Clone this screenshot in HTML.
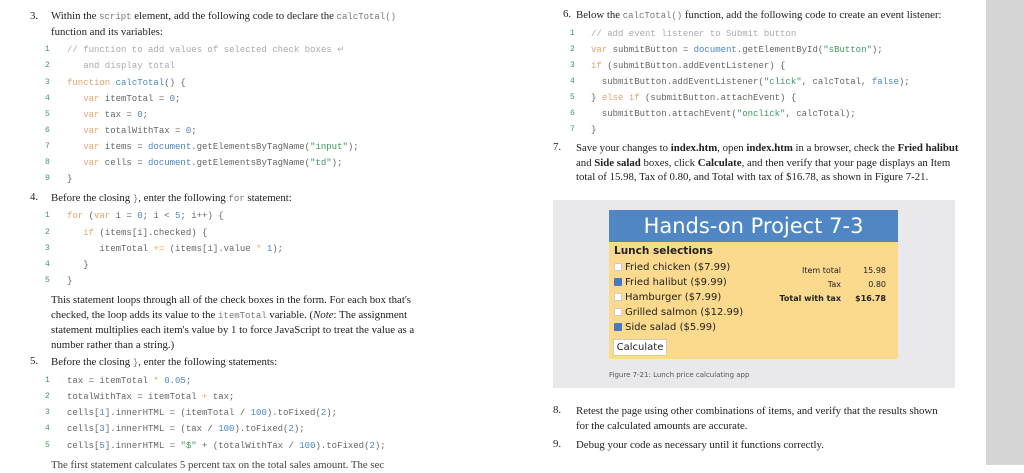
<!DOCTYPE html>
<html><head><meta charset="utf-8"><style>
body{margin:0;width:1024px;height:465px;position:relative;overflow:hidden;background:#fff;font-family:"Liberation Serif",serif;color:#222}
.t{position:absolute;font-size:10.8px;line-height:14.5px;white-space:nowrap}
.n{position:absolute;font-size:10.8px}
.c{position:absolute;font-family:"Liberation Mono",monospace;font-size:9px;color:#666;white-space:pre;line-height:10px}
.ln{position:absolute;font-family:"Liberation Mono",monospace;font-size:8px;color:#3a9a5a;line-height:10px}
.k{color:#e2a36a}.b{color:#4a86c0}.s{color:#3a9a5a}.g{color:#aaa}
code{font-family:"Liberation Mono",monospace;font-size:9px;color:#777}
.cb{display:inline-block;width:6px;height:6px;border:1px solid #ccc;background:#fff;border-radius:1px;margin-right:3px;vertical-align:-1px}
.cb.on{background:#4a78c0;border-color:#4a78c0}
</style></head><body>
<div style="position:absolute;left:986px;top:0;width:38px;height:465px;background:#d6d6d6"></div>

<div class="n" style="left:30px;top:10px">3.</div>
<div class="t" style="left:51px;top:9px;line-height:15px">Within the <code>script</code> element, add the following code to declare the <code>calcTotal()</code><br>function and its variables:</div>
<div class="ln" style="left:45px;top:45px">1</div><div class="c" style="left:67px;top:45px"><span class="g">// function to add values of selected check boxes ↵</span></div>
<div class="ln" style="left:45px;top:61px">2</div><div class="c" style="left:67px;top:61px"><span class="g">   and display total</span></div>
<div class="ln" style="left:45px;top:78px">3</div><div class="c" style="left:67px;top:78px"><span class="k">function</span> <span class="b">calcTotal</span>() {</div>
<div class="ln" style="left:45px;top:94px">4</div><div class="c" style="left:67px;top:94px">   <span class="k">var</span> itemTotal = <span class="b">0</span>;</div>
<div class="ln" style="left:45px;top:110px">5</div><div class="c" style="left:67px;top:110px">   <span class="k">var</span> tax = <span class="b">0</span>;</div>
<div class="ln" style="left:45px;top:126px">6</div><div class="c" style="left:67px;top:126px">   <span class="k">var</span> totalWithTax = <span class="b">0</span>;</div>
<div class="ln" style="left:45px;top:142px">7</div><div class="c" style="left:67px;top:142px">   <span class="k">var</span> items = <span class="b">document</span>.getElementsByTagName(<span class="s">"input"</span>);</div>
<div class="ln" style="left:45px;top:158px">8</div><div class="c" style="left:67px;top:158px">   <span class="k">var</span> cells = <span class="b">document</span>.getElementsByTagName(<span class="s">"td"</span>);</div>
<div class="ln" style="left:45px;top:174px">9</div><div class="c" style="left:67px;top:174px">}</div>

<div class="n" style="left:30px;top:191px">4.</div>
<div class="t" style="left:51px;top:191px">Before the closing <code>}</code>, enter the following <code>for</code> statement:</div>
<div class="ln" style="left:45px;top:211px">1</div><div class="c" style="left:67px;top:211px"><span class="k">for</span> (<span class="k">var</span> i = <span class="b">0</span>; i &lt; <span class="b">5</span>; i++) {</div>
<div class="ln" style="left:45px;top:228px">2</div><div class="c" style="left:67px;top:228px">   <span class="k">if</span> (items[i].checked) {</div>
<div class="ln" style="left:45px;top:244px">3</div><div class="c" style="left:67px;top:244px">      itemTotal <span class="k">+=</span> (items[i].value <span class="k">*</span> <span class="b">1</span>);</div>
<div class="ln" style="left:45px;top:260px">4</div><div class="c" style="left:67px;top:260px">   }</div>
<div class="ln" style="left:45px;top:276px">5</div><div class="c" style="left:67px;top:276px">}</div>
<div class="t" style="left:51px;top:293px">This statement loops through all of the check boxes in the form. For each box that's<br>checked, the loop adds its value to the <code>itemTotal</code> variable. (<i>Note</i>: The assignment<br>statement multiplies each item's value by 1 to force JavaScript to treat the value as a<br>number rather than a string.)</div>

<div class="n" style="left:30px;top:355px">5.</div>
<div class="t" style="left:51px;top:355px">Before the closing <code>}</code>, enter the following statements:</div>
<div class="ln" style="left:45px;top:376px">1</div><div class="c" style="left:67px;top:376px">tax = itemTotal <span class="k">*</span> <span class="b">0.05</span>;</div>
<div class="ln" style="left:45px;top:392px">2</div><div class="c" style="left:67px;top:392px">totalWithTax = itemTotal <span class="k">+</span> tax;</div>
<div class="ln" style="left:45px;top:408px">3</div><div class="c" style="left:67px;top:408px">cells[<span class="b">1</span>].innerHTML = (itemTotal / <span class="b">100</span>).toFixed(<span class="b">2</span>);</div>
<div class="ln" style="left:45px;top:424px">4</div><div class="c" style="left:67px;top:424px">cells[<span class="b">3</span>].innerHTML = (tax / <span class="b">100</span>).toFixed(<span class="b">2</span>);</div>
<div class="ln" style="left:45px;top:441px">5</div><div class="c" style="left:67px;top:441px">cells[<span class="b">5</span>].innerHTML = <span class="s">"$"</span> + (totalWithTax / <span class="b">100</span>).toFixed(<span class="b">2</span>);</div>
<div class="t" style="left:51px;top:458px;color:#444">The first statement calculates 5 percent tax on the total sales amount. The sec</div>

<div class="n" style="left:563px;top:8px">6.</div>
<div class="t" style="left:576px;top:8px">Below the <code>calcTotal()</code> function, add the following code to create an event listener:</div>
<div class="ln" style="left:570px;top:29px">1</div><div class="c" style="left:591px;top:29px"><span class="g">// add event listener to Submit button</span></div>
<div class="ln" style="left:570px;top:45px">2</div><div class="c" style="left:591px;top:45px"><span class="k">var</span> submitButton = <span class="b">document</span>.getElementById(<span class="s">"sButton"</span>);</div>
<div class="ln" style="left:570px;top:61px">3</div><div class="c" style="left:591px;top:61px"><span class="k">if</span> (submitButton.addEventListener) {</div>
<div class="ln" style="left:570px;top:77px">4</div><div class="c" style="left:591px;top:77px">  submitButton.addEventListener(<span class="s">"click"</span>, calcTotal, <span class="b">false</span>);</div>
<div class="ln" style="left:570px;top:93px">5</div><div class="c" style="left:591px;top:93px">} <span class="k">else if</span> (submitButton.attachEvent) {</div>
<div class="ln" style="left:570px;top:109px">6</div><div class="c" style="left:591px;top:109px">  submitButton.attachEvent(<span class="s">"onclick"</span>, calcTotal);</div>
<div class="ln" style="left:570px;top:125px">7</div><div class="c" style="left:591px;top:125px">}</div>
<div class="n" style="left:553px;top:141px">7.</div>
<div class="t" style="left:576px;top:141px">Save your changes to <b>index.htm</b>, open <b>index.htm</b> in a browser, check the <b>Fried halibut</b><br>and <b>Side salad</b> boxes, click <b>Calculate</b>, and then verify that your page displays an Item<br>total of 15.98, Tax of 0.80, and Total with tax of $16.78, as shown in Figure 7-21.</div>

<div style="position:absolute;left:553px;top:200px;width:402px;height:188px;background:#e9e9eb"></div>
<div style="position:absolute;left:609px;top:210px;width:289px;height:32px;background:#5086c4;color:#fff;font-family:'DejaVu Sans',sans-serif;font-size:21px;text-align:center;line-height:32px">Hands-on Project 7-3</div>
<div style="position:absolute;left:609px;top:242px;width:289px;height:117px;background:#fbd98d;font-family:'DejaVu Sans',sans-serif;color:#222">
 <div style="position:absolute;left:5px;top:3px;font-size:10.5px;font-weight:bold">Lunch selections</div>
 <div style="position:absolute;left:5px;top:18px;font-size:10px;line-height:15px;white-space:nowrap">
  <span class="cb"></span>Fried chicken ($7.99)<br>
  <span class="cb on"></span>Fried halibut ($9.99)<br>
  <span class="cb"></span>Hamburger ($7.99)<br>
  <span class="cb"></span>Grilled salmon ($12.99)<br>
  <span class="cb on"></span>Side salad ($5.99)</div>
 <div style="position:absolute;left:4px;top:97px;width:52px;height:15px;background:#fff;border:1px solid #ccc;font-size:10px;line-height:15px;text-align:center">Calculate</div>
 <div style="position:absolute;left:146px;top:22px;width:86px;text-align:right;font-size:8px;line-height:14px">Item total<br>Tax<br><b>Total with tax</b></div>
 <div style="position:absolute;left:240px;top:22px;width:37px;text-align:right;font-size:8px;line-height:14px">15.98<br>0.80<br><b>$16.78</b></div>
</div>
<div style="position:absolute;left:609px;top:371px;font-family:'DejaVu Sans',sans-serif;font-size:7px;color:#555">Figure 7-21: Lunch price calculating app</div>

<div class="n" style="left:553px;top:404px">8.</div>
<div class="t" style="left:576px;top:404px">Retest the page using other combinations of items, and verify that the results shown<br>for the calculated amounts are accurate.</div>
<div class="n" style="left:553px;top:438px">9.</div>
<div class="t" style="left:576px;top:438px">Debug your code as necessary until it functions correctly.</div>
</body></html>
